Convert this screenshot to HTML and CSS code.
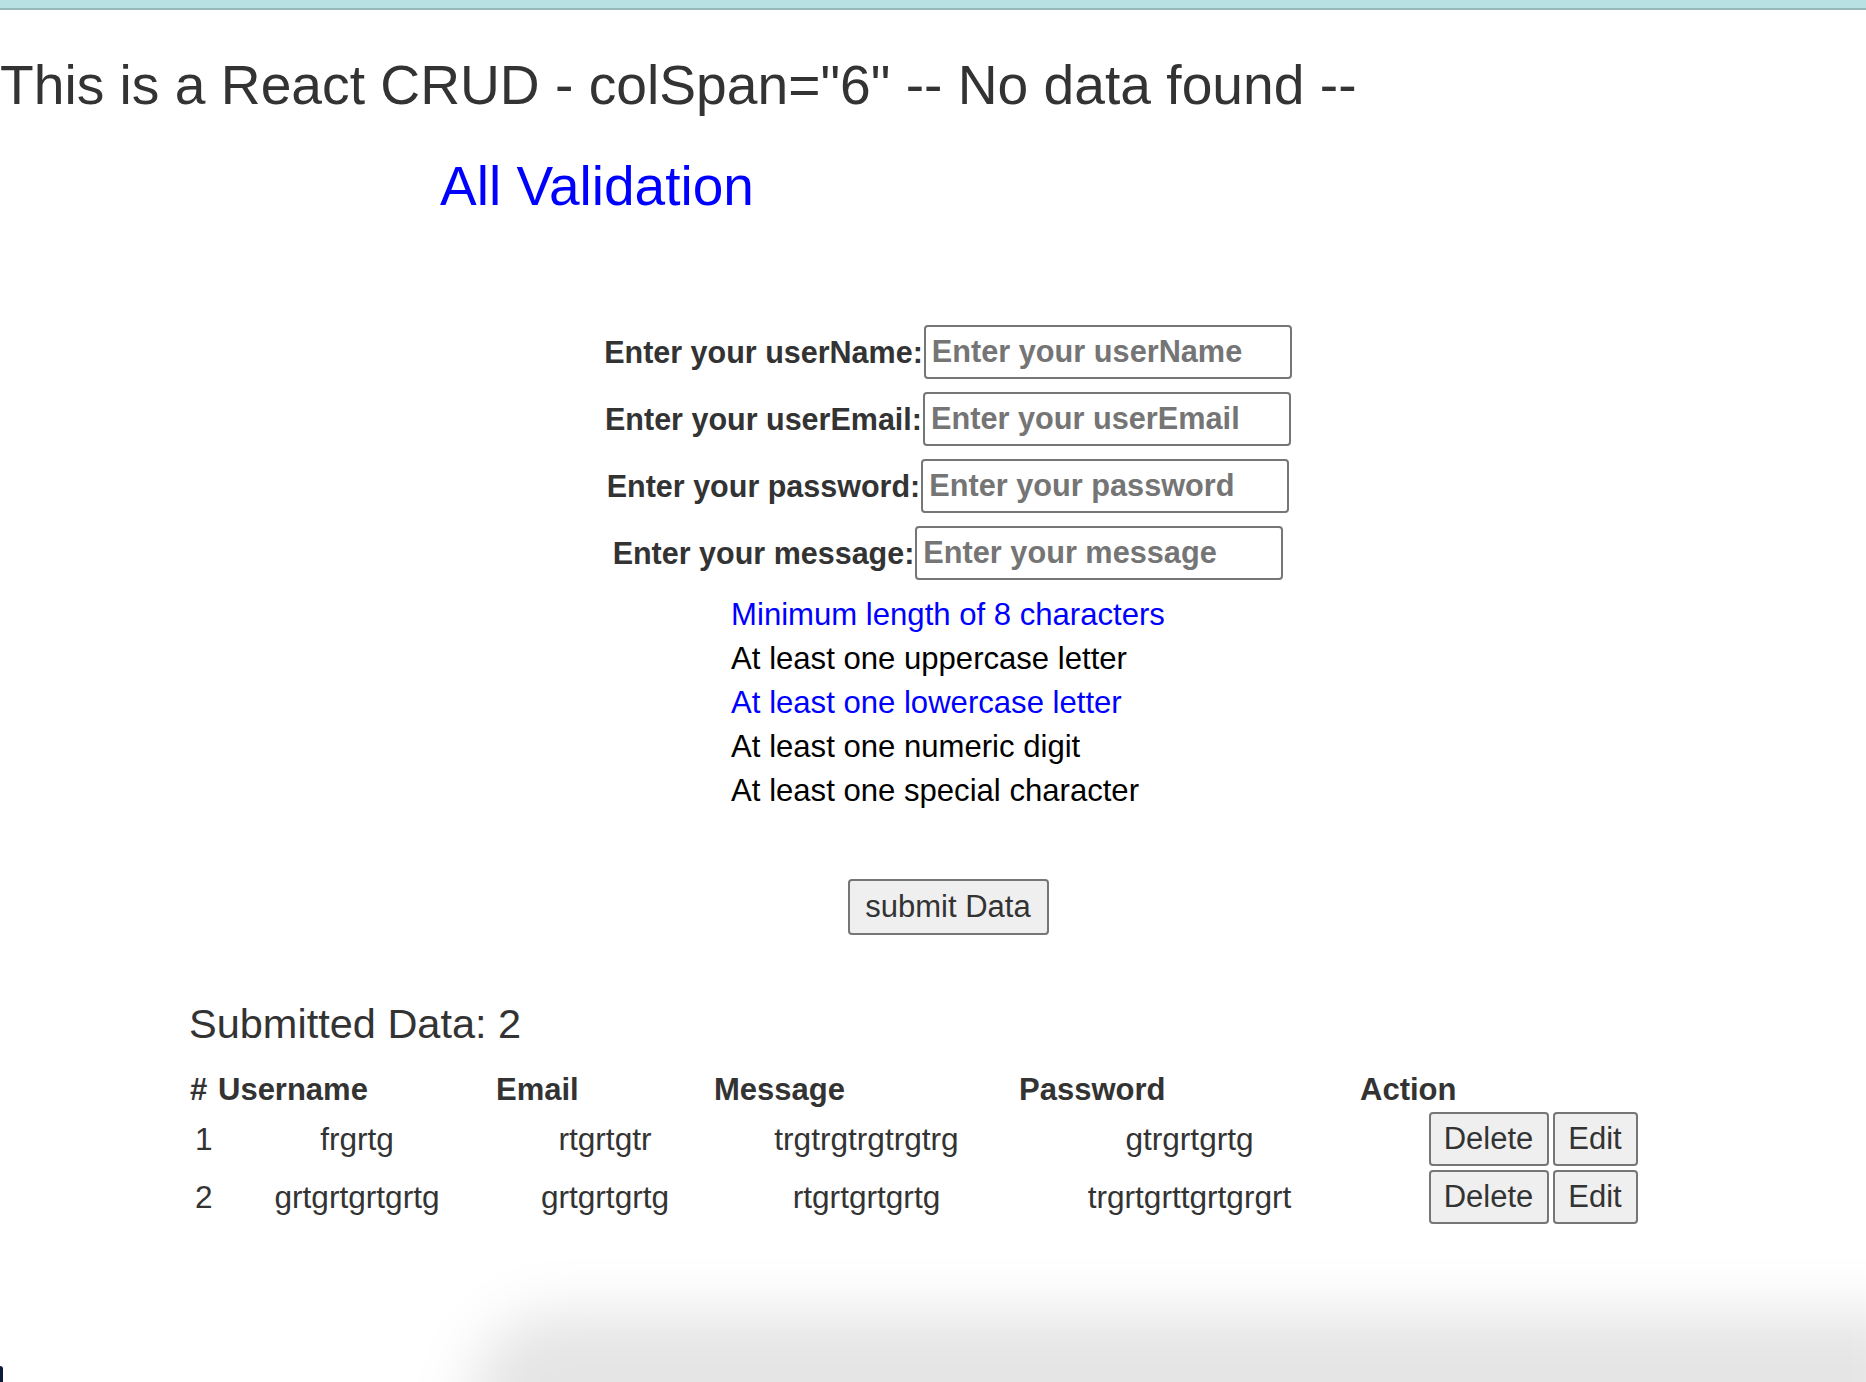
FILE: index.html
```html
<!DOCTYPE html>
<html lang="en">
<head>
<meta charset="utf-8">
<title>React CRUD</title>
<link rel="stylesheet" href="styles.css">
</head>
<body>
<div class="topbar"></div>
<div class="app">
  <h1 class="title">This is a React CRUD - colSpan="6" -- No data found --</h1>
  <h2 class="subtitle">All Validation</h2>

  <div class="page">
    <form class="form">
      <div class="field">
        <label class="label">Enter your userName:</label>
        <input class="input" type="text" placeholder="Enter your userName">
      </div>
      <div class="field">
        <label class="label">Enter your userEmail:</label>
        <input class="input" type="text" placeholder="Enter your userEmail">
      </div>
      <div class="field">
        <label class="label">Enter your password:</label>
        <input class="input" type="password" placeholder="Enter your password">
      </div>
      <div class="field">
        <label class="label">Enter your message:</label>
        <input class="input" type="text" placeholder="Enter your message">
      </div>

      <div class="rules">
        <div class="rule rule-ok">Minimum length of 8 characters</div>
        <div class="rule">At least one uppercase letter</div>
        <div class="rule rule-ok">At least one lowercase letter</div>
        <div class="rule">At least one numeric digit</div>
        <div class="rule">At least one special character</div>
      </div>

      <div class="submit-row">
        <button type="button" class="btn btn-submit">submit Data</button>
      </div>
    </form>

    <section class="data">
      <h3 class="data-title">Submitted Data: 2</h3>
      <table class="table">
        <colgroup>
          <col class="c-num">
          <col class="c-user">
          <col class="c-email">
          <col class="c-msg">
          <col class="c-pass">
          <col class="c-act">
        </colgroup>
        <thead>
          <tr>
            <th>#</th>
            <th>Username</th>
            <th>Email</th>
            <th>Message</th>
            <th>Password</th>
            <th>Action</th>
          </tr>
        </thead>
        <tbody>
          <tr>
            <td>1</td>
            <td>frgrtg</td>
            <td>rtgrtgtr</td>
            <td>trgtrgtrgtrgtrg</td>
            <td>gtrgrtgrtg</td>
            <td class="act-cell"><div class="actions"><button type="button" class="btn btn-row btn-del">Delete</button><button type="button" class="btn btn-row btn-edit">Edit</button></div></td>
          </tr>
          <tr>
            <td>2</td>
            <td>grtgrtgrtgrtg</td>
            <td>grtgrtgrtg</td>
            <td>rtgrtgrtgrtg</td>
            <td>trgrtgrttgrtgrgrt</td>
            <td class="act-cell"><div class="actions"><button type="button" class="btn btn-row btn-del">Delete</button><button type="button" class="btn btn-row btn-edit">Edit</button></div></td>
          </tr>
        </tbody>
      </table>
    </section>
  </div>
</div>
<div class="window-shadow"></div>
<div class="corner"></div>
</body>
</html>
```

FILE: styles.css
```css
html, body {
  margin: 0;
  padding: 0;
  background: #ffffff;
}

body {
  font-family: "Liberation Sans", Arial, Helvetica, sans-serif;
  color: #333333;
  min-height: 1382px;
  overflow: hidden;
}

.topbar {
  height: 8px;
  background: #b8e1e3;
  border-bottom: 2px solid #98b9ba;
}

.app {
  display: flex;
  flex-direction: column;
}

.title {
  margin: 44px 0 0 0;
  font-size: 55.2px;
  line-height: 62px;
  font-weight: normal;
  color: #333333;
}

.subtitle {
  margin: 39px 0 0 440px;
  font-size: 55px;
  line-height: 62px;
  font-weight: normal;
  color: #0000ff;
}

.page {
  padding-left: 30px;
  display: flex;
  flex-direction: column;
}

.form {
  margin-top: 108px;
  display: flex;
  flex-direction: column;
  align-items: center;
  gap: 13px;
}

.field {
  display: flex;
  align-items: center;
  gap: 1px;
}

.label {
  font-weight: bold;
  font-size: 30.5px;
  color: #333333;
}

.input {
  box-sizing: border-box;
  width: 368px;
  height: 54px;
  border: 2px solid #767676;
  border-radius: 4px;
  padding: 0 6px;
  font-family: inherit;
  font-weight: bold;
  font-size: 30.7px;
  color: #333333;
  background: #ffffff;
}

.input::placeholder {
  color: #757575;
}

.rules {
  display: flex;
  flex-direction: column;
  align-items: flex-start;
}

.rule {
  font-size: 31.1px;
  line-height: 44px;
  color: #000000;
}

.rule-ok {
  color: #0000ff;
}

.submit-row {
  margin-top: 53px;
  display: flex;
  justify-content: center;
}

.btn {
  box-sizing: border-box;
  font-family: inherit;
  font-size: 31px;
  color: #333333;
  background: #efefef;
  border: 2px solid #767676;
  border-radius: 4px;
  cursor: pointer;
}

.btn-submit {
  width: 201px;
  height: 56px;
  padding: 0;
}

.data {
  width: 1522px;
  margin: 65px auto 0 auto;
}

.data-title {
  margin: 0 0 0 2px;
  font-size: 41.5px;
  line-height: 48px;
  font-weight: normal;
  color: #333333;
}

.table {
  margin-top: 21px;
  table-layout: fixed;
  width: 1522px;
  border-spacing: 2px;
  font-size: 31px;
  color: #333333;
}

.c-num { width: 26px; }
.c-user { width: 276px; }
.c-email { width: 216px; }
.c-msg { width: 303px; }
.c-pass { width: 339px; }
.c-act { width: 348px; }

.table th {
  padding: 1px;
  text-align: left;
  font-weight: bold;
  line-height: 36px;
  white-space: nowrap;
}

.table td {
  padding: 1px 1px 1px 5px;
  text-align: center;
  font-size: 31.6px;
  line-height: 36px;
  white-space: nowrap;
}

.table td:first-child {
  text-align: left;
  padding-left: 6px;
}

.table td.act-cell {
  padding: 1px;
}

.actions {
  display: flex;
  justify-content: center;
  gap: 4px;
}

.btn-row {
  height: 54px;
  padding: 0 13px;
}

.btn-del { width: 120px; }
.btn-edit { width: 85px; }

.window-shadow {
  position: fixed;
  left: 470px;
  right: -40px;
  bottom: -60px;
  height: 130px;
  border-top-left-radius: 90px;
  background: rgba(0, 0, 0, 0.10);
  filter: blur(28px);
  pointer-events: none;
}

.corner {
  position: fixed;
  left: 0;
  bottom: 0;
  width: 3px;
  height: 16px;
  background: #0d1b3a;
  border-top-right-radius: 3px;
}
```
